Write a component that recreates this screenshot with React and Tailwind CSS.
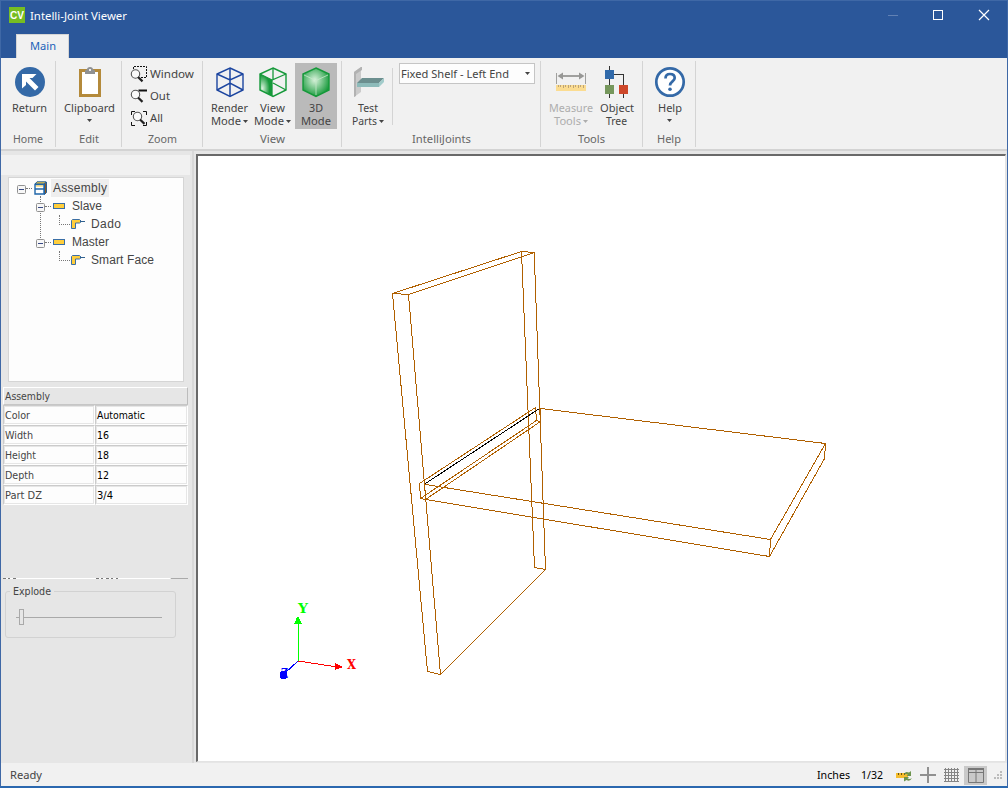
import React from "react";

const ui = "font-['Noto_Sans','Open_Sans',sans-serif]";

function Caret({ className = "" }) {
  return (
    <svg className={"inline-block h-[3px] w-[5px] " + className} viewBox="0 0 5 3">
      <path d="M0 0H5L2.5 3Z" fill="currentColor" />
    </svg>
  );
}

function Label({ w, children, className = "" }) {
  return (
    <svg className={"block h-[13px] overflow-visible " + className} style={{ width: w }}>
      <text x="0" y="10" textLength={w} lengthAdjust="spacingAndGlyphs" fill="currentColor" fontSize="11">
        {children}
      </text>
    </svg>
  );
}

function Group({ className, label, w, children, align = "justify-center pl-[2px]" }) {
  return (
    <section className={"flex h-[86px] shrink-0 flex-col border-r border-[#d4d4d4] " + className}>
      <div className={"flex h-[72px] pt-[2px] " + align}>{children}</div>
      <div className="flex justify-center text-[#666]">
        <Label w={w}>{label}</Label>
      </div>
    </section>
  );
}

function BigButton({ icon, className, lines, caret, inlineCaret, textShift = "" }) {
  return (
    <button className={"flex h-[66px] shrink-0 flex-col items-center pt-[3px] " + className}>
      <span className="flex h-[32px] w-[32px] justify-center">{icon}</span>
      <span className={"mt-[4px] flex flex-col items-center " + textShift}>
        {lines.map(([text, w], i) => (
          <span key={text} className="flex h-[13px] items-center">
            <Label w={w}>{text}</Label>
            {inlineCaret && i === lines.length - 1 && <Caret className="ml-[2px]" />}
          </span>
        ))}
      </span>
      {caret && <Caret className={"mt-[4px] " + textShift} />}
    </button>
  );
}

const ReturnIcon = (
  <svg width="32" height="32" viewBox="0 0 32 32">
    <circle cx="16" cy="16" r="15" fill="#3469a7" />
    <path d="M8 8H22.5L18.5 12H15.5L24.5 21L21 24.5L12 15.5V19L8 22.5Z" fill="#fff" />
  </svg>
);

const ClipboardIcon = (
  <svg width="32" height="32" viewBox="0 0 32 32">
    <path d="M5 3H27V31H5Z" fill="#b48a3b" />
    <path d="M8 6H24V28H8Z" fill="#fff" />
    <path d="M11 8V5Q11 3.5 13 3.5H13Q13 1 16 1T19 3.5Q21 3.5 21 5V8Z" fill="#8f9193" />
    <rect x="15" y="3" width="2" height="2" fill="#eee" />
  </svg>
);

function CubeIcon({ kind }) {
  const c = kind === "render" ? "#1d46a0" : "#16993a";
  return (
    <svg width="32" height="32" viewBox="0 0 32 32">
      <defs>
        <radialGradient id={"shade" + kind} cx={kind === "view" ? "0.2" : "0.45"} cy={kind === "view" ? "0.65" : "0.42"} r="0.6">
          <stop offset="0" stopColor="#d8f2db" />
          <stop offset="1" stopColor="#16993a" />
        </radialGradient>
      </defs>
      {kind === "solid" && <path d="M16 2L29 8V24L16 30.5L3 24V8Z" fill="url(#shadesolid)" />}
      {kind === "view" && <path d="M3 8L15 14V30L3 24Z" fill="url(#shadeview)" />}
      <path d="M16 2L29 8V24L16 30.5L3 24V8Z" fill="none" stroke={c} strokeWidth="1.4" />
      {kind === "render" && (
        <path d="M3 8L16 14L29 8M16 14V30M16 2V17M3 24L16 17L29 24" fill="none" stroke={c} strokeWidth="1.5" />
      )}
      {kind === "view" && (
        <path d="M3 8L15 14L29 8M15 14V30M16 2V14M16 17L29 24" fill="none" stroke={c} strokeWidth="1.3" />
      )}
      {kind === "solid" && <path d="M4 9L16 14.5L28 9M16 14.5V29" fill="none" stroke="#c5e9ca" strokeWidth=".8" />}
    </svg>
  );
}

const PartsIcon = (
  <svg width="32" height="32" viewBox="0 0 32 32">
    <path d="M2 6L9 1V26L2 31Z" fill="#cbcbcb" />
    <path d="M2 6L9 1H10V4L4 8V30L2 31Z" fill="#b2b2b2" />
    <path d="M5 17L10 12H32L27 17Z" fill="#6c8f8f" />
    <path d="M5 17H27L32 12V16L27 21H5Z" fill="#a2cccb" />
    <path d="M5 17H27V21H5Z" fill="#8dbbba" />
  </svg>
);

const MeasureIcon = (
  <svg width="32" height="32" viewBox="0 0 32 32">
    <g stroke="#a0a09e" fill="none">
      <path d="M1.5 7V18M30.5 7V18" />
      <path d="M4 10H28" strokeWidth="2" />
    </g>
    <path d="M2.5 10L8 6.5V13.5ZM29.5 10L24 6.5V13.5Z" fill="#979795" />
    <path d="M1 19H31V25H1Z" fill="#fbdc91" />
    <path d="M3.5 19V21M5.5 19V21M8.5 19V22M10.5 19V21M13.5 19V22M15.5 19V21M18.5 19V22M20.5 19V21M23.5 19V22M25.5 19V21M28.5 19V22" stroke="#bda477" />
  </svg>
);

const TreeIcon = (
  <svg width="32" height="32" viewBox="0 0 32 32" shapeRendering="crispEdges">
    <path d="M7.5 0V32M7.5 8.5H21.5V32" fill="none" stroke="#333" />
    <path d="M3 4H12V13H3Z" fill="#316aaa" />
    <path d="M3 19H12V28H3Z" fill="#76975c" />
    <path d="M17 19H26V28H17Z" fill="#ce482b" />
  </svg>
);

const HelpIcon = (
  <svg width="32" height="32" viewBox="0 0 32 32">
    <circle cx="16" cy="16" r="13.7" fill="#fff" stroke="#3469a7" strokeWidth="2.7" />
    <path d="M11.5 12.5C11.5 9.5 13.3 8 16 8C19 8 20.7 9.7 20.7 12C20.7 15.5 16 15.3 16 19.5" fill="none" stroke="#3469a7" strokeWidth="2.7" />
    <circle cx="16" cy="23.3" r="1.8" fill="#3469a7" />
  </svg>
);

const lensPlace = { window: "translate(0 1.5)", out: "translate(0 0)", all: "translate(2 0)" };

function ZoomRow({ kind, label, w }) {
  return (
    <button className="flex h-[22px] items-center gap-[2px]">
      <svg className="h-[17px] w-[18px]" viewBox="0 0 18 17">
        <g transform="translate(.5 0)">
          {kind === "window" && <path d="M3 3V.5H16V11.5H10" fill="none" stroke="#111" strokeDasharray="2 1" />}
          {kind === "out" && <path d="M8 2.5H16.5" stroke="#111" strokeWidth="2" />}
          {kind === "all" && <path d="M1 5V1.5H4.5M12.5 1.5H16V5M1 12V15.5H4.5M12.5 15.5H16V12" fill="none" stroke="#111" />}
          <g transform={lensPlace[kind]}>
            <circle cx="5" cy="6.5" r="4.2" fill="#fafafa" stroke="#555" strokeWidth="1.1" />
            <path d="M7.5 9.5L12 13.9" stroke="#222" strokeWidth="2.2" />
          </g>
        </g>
      </svg>
      <Label w={w}>{label}</Label>
    </button>
  );
}

function Expander() {
  return (
    <svg className="h-[9px] w-[9px] shrink-0" viewBox="0 0 9 9">
      <rect x=".5" y=".5" width="8" height="8" rx="1" fill="#f7f7f7" stroke="#919191" />
      <path d="M2 4.5H7" stroke="#374985" />
    </svg>
  );
}

function TreeText({ w, children }) {
  return (
    <svg className="h-[16px] overflow-visible font-['Liberation_Sans',sans-serif]" style={{ width: w }}>
      <text x="0" y="12" textLength={w} fontSize="12" fill="#454545">{children}</text>
    </svg>
  );
}

const BoardIcon = (
  <svg className="h-[6px] w-[12px] shrink-0" viewBox="0 0 12 6">
    <rect x=".5" y=".5" width="11" height="5" fill="#ffce3c" stroke="#3a6ea5" />
  </svg>
);

const DrillIcon = (
  <svg className="h-[12px] w-[15px] shrink-0" viewBox="0 0 15 12">
    <path d="M1.5 2.5L2.5 1.5H9.5L11.5 3.5L9.5 5H5.5V10.5H1.5Z" fill="#ffce3c" stroke="#3a6ea5" />
    <path d="M10 3.5H15" stroke="#31618f" />
  </svg>
);

const CabinetIcon = (
  <svg className="h-[14px] w-[13px] shrink-0" viewBox="0 0 13 14">
    <path d="M10.5 3L12.5 1V11.5L10.5 13.5Z" fill="#8a5925" stroke="#2e5f8e" />
    <path d="M1 3L3 .8H12L10 3Z" fill="#ffce3c" stroke="#235e99" />
    <path d="M1 3.5H10V13H1ZM1 8H10" fill="#fff" stroke="#1f65a9" strokeWidth="1.4" />
    <path d="M2 5H9" stroke="#ffce3c" />
  </svg>
);

function TreeChild({ label, w }) {
  return (
    <div className="flex h-[18px] items-center pl-[50px]">
      <span className="mb-[9px] h-[10px] w-[11px] border-b border-l border-dotted border-[#777]" />
      {DrillIcon}
      <span className="ml-[6px] flex"><TreeText w={w}>{label}</TreeText></span>
    </div>
  );
}

function TreeParent({ label, w }) {
  return (
    <div className="flex h-[18px] items-center pl-[27px]">
      <span className="mt-[2px] flex"><Expander /></span>
      <span className="mr-[2px] w-[6px] border-b border-dotted border-[#777]" />
      {BoardIcon}
      <span className="ml-[7px] flex"><TreeText w={w}>{label}</TreeText></span>
    </div>
  );
}

function TreeView() {
  return (
    <div className="relative ml-[7px] mt-[2px] h-[205px] w-[176px] border border-[#d5d5d5] bg-[#fdfdfd] pt-[1px]">
      <i className="absolute left-[31px] top-[18px] h-[44px] border-l border-dotted border-[#777]" />
      <div className="relative flex h-[18px] items-center pl-[8px]">
        <span className="mt-[2px] flex"><Expander /></span>
        <span className="mr-[2px] w-[6px] border-b border-dotted border-[#777]" />
        {CabinetIcon}
        <span className="ml-[4px] flex bg-[#eee] px-[2px] py-[1px]"><TreeText w={54}>Assembly</TreeText></span>
      </div>
      <div className="relative">
        <TreeParent label="Slave" w={30} />
        <TreeChild label="Dado" w={30} />
        <TreeParent label="Master" w={37} />
        <TreeChild label="Smart Face" w={63} />
      </div>
    </div>
  );
}

function TahomaText({ w, children }) {
  return (
    <svg className="h-[14px] overflow-visible font-['DejaVu_Sans_Condensed','DejaVu_Sans',sans-serif]" style={{ width: w }}>
      <text y="11" textLength={w} lengthAdjust="spacingAndGlyphs" fontSize="11" fill="currentColor">{children}</text>
    </svg>
  );
}

const properties = [
  ["Color", 25, "Automatic", 48],
  ["Width", 28, "16", 12],
  ["Height", 31, "18", 12],
  ["Depth", 29, "12", 12],
  ["Part DZ", 37, "3/4", 16],
];

const cell = "flex items-center border border-t-[#cbcbcb] border-l-[#cbcbcb] border-r-white border-b-white bg-[#fdfdfd] shadow-[inset_0_0_0_1px_#e6e6e6] ";

function PropertyGrid() {
  return (
    <div className="ml-[2px] mt-[5px] w-[185px]">
      <div className="flex h-[18px] items-center border border-l-white border-t-white border-r-[#bcbcbc] border-b-[#c6c6c6] pl-px text-[#444]">
        <TahomaText w={45}>Assembly</TahomaText>
      </div>
      {properties.map(([name, nw, value, vw]) => (
        <div key={name} className="flex h-[20px]">
          <div className={cell + "w-[92px] pl-px text-[#444]"}>
            <TahomaText w={nw}>{name}</TahomaText>
          </div>
          <div className={cell + "w-[93px] pl-px text-black"}>
            <TahomaText w={vw}>{value}</TahomaText>
          </div>
        </div>
      ))}
    </div>
  );
}

function Explode() {
  return (
    <fieldset className="ml-[4px] mt-[4px] h-[54px] w-[171px] rounded-[3px] border border-[#d2d2d2]">
      <legend className="ml-[4px] h-[14px] px-[3px] text-[#444]"><TahomaText w={38}>Explode</TahomaText></legend>
      <svg className="ml-[10px] mt-[10px] h-[18px] w-[148px]" viewBox="0 0 148 18">
        <path d="M0 9.5H146" stroke="#a9a9a9" />
        <rect x="3.5" y="1.5" width="4" height="15" fill="#e6e6e6" stroke="#a9a9a9" />
      </svg>
    </fieldset>
  );
}

function Viewport() {
  return (
    <svg className="block h-[605px] w-[807px]" viewBox="198 156 807 605" shapeRendering="crispEdges" fill="none">
      <g stroke="#b06000">
        <path d="M392.5 293.5L521.5 251.5L534.5 252.5L408.5 294.5ZM392.5 293.5L427.5 671.5L440.5 674.5L408.5 294.5M521.5 251.5L534.5 567.5L545.5 569.5L534.2 252.5M440.5 674.5L545.5 569.5" />
        <path d="M540.5 408.5L825.5 443.5L824.5 458.5L769.5 556.5L425.5 499.5M825.5 443.5L770.5 539.5L769.5 556.5M770.5 539.5L425.5 484.5" />
        <path d="M419.5 483.5L535.5 407.5L536.5 420.5L420.5 498.5ZM424.5 480.5L425.5 499.5L540.5 421.5V408.5M420.5 498.5L425.5 499.5M535.5 420.5L540.5 421.5" />
      </g>
      <path d="M425.5 483.5L539.5 408.5" stroke="#000" />
      <path d="M298.5 661V624" stroke="#0f0" />
      <path d="M297 617H299L300 620L302 624H294L296 620Z" fill="#0f0" />
      <path d="M298 661L337 667" stroke="#f00" />
      <path d="M335 663L343 667L335 670Z" fill="#f00" />
      <path d="M298 661L285 673" stroke="#00f" />
      <circle cx="283.5" cy="675" r="4" fill="#00f" />
      <g className="font-['DejaVu_Serif',serif] font-bold text-[12px]">
        <text x="298" y="613" textLength="10" lengthAdjust="spacingAndGlyphs" fill="#0f0">Y</text>
        <text x="347" y="669" textLength="9" lengthAdjust="spacingAndGlyphs" fill="#f00">X</text>
        <text x="281" y="678" textLength="7" lengthAdjust="spacingAndGlyphs" fill="#00f">Z</text>
      </g>
    </svg>
  );
}

function StatusBar() {
  return (
    <footer className="flex h-[23px] items-center bg-[#f1f1f1] pt-px text-[#444]">
      <Label w={32} className="ml-[9px]">Ready</Label>
      <div className="ml-auto flex items-center text-black">
        <Label w={33}>Inches</Label>
        <Label w={22} className="ml-[11px]">1/32</Label>
        <svg className="ml-[13px] h-[16px] w-[17px]" viewBox="0 0 17 16">
          <path d="M0 6H12V11H0Z" fill="#f5bd2e" />
          <path d="M2.5 6V8M5.5 6V8M8.5 6V8" stroke="#655018" />
          <path d="M8 8Q9 3.5 13 5.5L15 4V9H10.5L12 7.5Q9.5 6.5 8 8ZM16 11Q14 15 10.5 13L8 14.5V10H13L11.5 11.5Q14 12.5 16 11Z" fill="#6d944e" />
        </svg>
        <svg className="ml-[7px] h-[16px] w-[16px]" viewBox="0 0 16 16">
          <path d="M8 0V16M0 8H16" stroke="#909090" strokeWidth="2" />
        </svg>
        <svg className="ml-[8px] h-[16px] w-[15px]" viewBox="0 0 15 16">
          <path d="M1.5 1V15M4.5 1V15M7.5 1V15M10.5 1V15M13.5 1V15M0 2.5H15M0 5.5H15M0 8.5H15M0 11.5H15M0 14.5H15" stroke="#858585" />
        </svg>
        <span className="ml-[5px] flex h-[19px] w-[23px] items-center justify-center bg-[#c9c9c9]">
          <svg className="h-[15px] w-[16px]" viewBox="0 0 16 15">
            <path d="M.5 1H15.5V14.5H.5ZM.5 4.5H15.5M8 1V14" fill="none" stroke="#777" />
            <path d="M0 1H16" stroke="#777" strokeWidth="2" />
          </svg>
        </span>
        <svg className="ml-[7px] mr-[4px] h-[9px] w-[9px]" viewBox="0 0 9 9">
          <path d="M6 0H8V2H6ZM3 3H5V5H3ZM6 3H8V5H6ZM0 6H2V8H0ZM3 6H5V8H3ZM6 6H8V8H6Z" fill="#bbb" />
        </svg>
      </div>
    </footer>
  );
}

export default function App() {
  return (
    <main className={"flex h-[788px] w-[1008px] flex-col overflow-hidden border border-b-2 border-[#3f68a6] border-b-[#2b68af] bg-[#e6e6e6] text-[#444] " + ui}>
      <header className="h-[57px] shrink-0 bg-[#2b579a]">
        <div className="flex h-[33px] items-start">
          <svg className="ml-[8px] mt-[6px] h-[16px] w-[16px] overflow-visible font-['Liberation_Sans',sans-serif]" viewBox="0 0 16 16">
            <rect width="16" height="16" fill="#76bd22" />
            <text x="1" y="12" textLength="14" lengthAdjust="spacingAndGlyphs" fontSize="11" fontWeight="bold" fill="#fff">CV</text>
          </svg>
          <svg className="ml-[5px] mt-[7px] h-[16px] w-[98px] overflow-visible">
            <text y="12" textLength="97" lengthAdjust="spacingAndGlyphs" fontSize="11.5" fill="#fff">Intelli-Joint Viewer</text>
          </svg>
          <svg className="ml-auto mr-[17px] mt-[8px] h-[12px] w-[102px]" viewBox="0 0 102 12">
            <path d="M0 6.5H10" stroke="#6181b4" />
            <rect x="45.5" y="1.5" width="9" height="9" fill="none" stroke="#fff" />
            <path d="M91 1L101 11M101 1L91 11" stroke="#fff" strokeWidth="1.2" />
          </svg>
        </div>
        <div className="ml-[15px] flex h-[24px] w-[53px] items-center justify-center border border-b-0 border-[#d5d5d5] bg-[#f1f1f1] text-[#1962b9]">
          <Label w={26}>Main</Label>
        </div>
      </header>
      <nav className="flex h-[93px] shrink-0 border-b-2 border-[#d3d3d3] bg-[#f1f1f1] pt-[3px]">
        <Group className="w-[55px]" label="Home" w={30} align="pl-[4px]">
          <BigButton className="w-[50px]" icon={ReturnIcon} lines={[["Return", 35]]} textShift="mr-[2px]" />
        </Group>
        <Group className="w-[66px]" label="Edit" w={20}>
          <BigButton className="w-[60px]" icon={ClipboardIcon} lines={[["Clipboard", 51]]} caret textShift="mr-px" />
        </Group>
        <Group className="w-[81px]" label="Zoom" w={29}>
          <div className="flex w-[66px] flex-col">
            <ZoomRow kind="window" label="Window" w={44} />
            <ZoomRow kind="out" label="Out" w={20} />
            <ZoomRow kind="all" label="All" w={13} />
          </div>
        </Group>
        <Group className="w-[139px]" label="View" w={25}>
          <BigButton className="w-[43px] pr-[2px]" icon={<CubeIcon kind="render" />} lines={[["Render", 37], ["Mode", 30]]} inlineCaret />
          <BigButton className="w-[43px] pr-[2px]" icon={<CubeIcon kind="view" />} lines={[["View", 25], ["Mode", 30]]} inlineCaret />
          <BigButton className="w-[42px] bg-[#bababa]" icon={<CubeIcon kind="solid" />} lines={[["3D", 14], ["Mode", 30]]} />
        </Group>
        <Group className="w-[199px]" label="IntelliJoints" w={59} align="pl-px">
          <BigButton className="w-[51px] pr-px" icon={PartsIcon} lines={[["Test", 20], ["Parts", 25]]} inlineCaret />
          <div className="-ml-[2px] mr-[6px] mt-[5px] h-[57px] border-r border-[#d4d4d4]" />
          <div className="flex h-[21px] w-[136px] items-center border border-[#c5c5c5] bg-[#fdfdfd] pl-px pr-[4px]">
            <Label w={108} className="mt-px">Fixed Shelf - Left End</Label>
            <Caret className="ml-auto" />
          </div>
        </Group>
        <Group className="w-[102px]" label="Tools" w={27}>
          <BigButton className="w-[50px] text-[#adadad]" icon={MeasureIcon} lines={[["Measure", 44], ["Tools", 27]]} inlineCaret />
          <BigButton className="w-[43px]" icon={TreeIcon} lines={[["Object", 34], ["Tree", 21]]} textShift="mr-[2px]" />
        </Group>
        <Group className="w-[53px]" label="Help" w={24}>
          <BigButton className="w-[48px]" icon={HelpIcon} lines={[["Help", 24]]} caret textShift="mr-px" />
        </Group>
      </nav>
      <div className="flex h-[612px] shrink-0">
        <aside className="w-[191px] shrink-0 pt-[4px]">
          <div className="h-[20px] w-[189px] bg-[#f1f1f1]" />
          <TreeView />
          <PropertyGrid />
          <svg className="ml-[2px] mt-[72px] h-[3px] w-[187px]" viewBox="0 0 187 3">
            <path d="M0 1.5H167" stroke="#fff" />
            <path d="M0 1.5H15M93 1.5H115" stroke="#777" strokeDasharray="3 2 2 3" />
            <path d="M168 1.5H185" stroke="#aaa" />
          </svg>
          <Explode />
        </aside>
        <div className="w-[4px] shrink-0 border-l-2 border-[#d8d8d8]" />
        <div className="mr-px mt-[3px] h-[608px] min-w-0 flex-1 border border-l-2 border-t-2 border-[#696969] border-r-[#e3e3e3] border-b-[#e3e3e3] bg-white">
          <Viewport />
        </div>
      </div>
      <StatusBar />
    </main>
  );
}
